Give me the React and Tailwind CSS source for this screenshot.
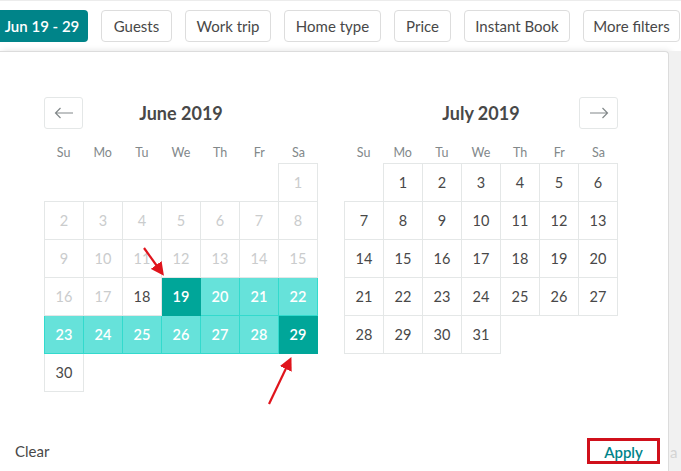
import React from 'react';

const filters = [
    { label: 'Guests', w: 'w-[71px]' },
    { label: 'Work trip', w: 'w-[86px]' },
    { label: 'Home type', w: 'w-[97px]' },
    { label: 'Price', w: 'w-[57px]' },
    { label: 'Instant Book', w: 'w-[106px]' },
    { label: 'More filters', w: 'w-[97px]' }
];
const weekdays = ['Su', 'Mo', 'Tu', 'We', 'Th', 'Fr', 'Sa'];

// June 2019 starts on Saturday, July 2019 on Monday
const buildWeeks = (offset, days) => {
    const cells = [...Array(offset).fill(null), ...Array.from({ length: days }, (_, i) => i + 1)];
    while (cells.length % 7) cells.push(null);
    const weeks = [];
    for (let i = 0; i < cells.length; i += 7) weeks.push(cells.slice(i, i + 7));
    return weeks;
};

function dayClass(month, day) {
    if (month === 'june') {
        if (day === 19 || day === 29) return 'bg-[#00a699] border-[#00a699] text-white font-semibold';
        if (day > 19 && day < 29) return 'bg-[#66e2da] border-[#33dacd] text-white font-semibold';
        if (day < 18) return 'bg-white border-[#e4e7e7] text-[#cacccd]';
    }
    return 'bg-white border-[#e4e7e7] text-[#484848]';
}

function NavButton({ dir }) {
    return (
        <button className="w-[39px] h-[32px] border border-[#e4e7e7] rounded-[3px] bg-white flex items-center justify-center">
            <svg width="20" height="12" viewBox="0 0 20 12" fill="none" stroke="#82888a" strokeWidth="1.2">
                {dir === 'left' ? (
                    <path d="M19 6H1.5M6.5 1L1.5 6l5 5" />
                ) : (
                    <path d="M1 6h17.5M13.5 1l5 5-5 5" />
                )}
            </svg>
        </button>
    );
}

function Month({ title, name, offset, days, nav }) {
    const weeks = buildWeeks(offset, days);
    return (
        <div className="w-[274px]">
            <div className="relative h-[32px] flex items-center justify-center">
                {nav === 'left' && <div className="absolute left-0 top-0"><NavButton dir="left" /></div>}
                {nav === 'right' && <div className="absolute right-0 top-0"><NavButton dir="right" /></div>}
                <div className="text-[18px] font-bold text-[#484848]">{title}</div>
            </div>
            <div className="mt-[15px] h-[19px] grid grid-cols-7 text-[12.5px] text-[#82888a]">
                {weekdays.map((d) => (
                    <div key={d} className="text-center">{d}</div>
                ))}
            </div>
            <table className="border-collapse">
                <tbody>
                    {weeks.map((week, wi) => (
                        <tr key={wi}>
                            {week.map((day, di) =>
                                day ? (
                                    <td
                                        key={di}
                                        className={`w-[39px] h-[38px] p-0 border text-center text-[14.5px] ${dayClass(name, day)}`}
                                    >
                                        {day}
                                    </td>
                                ) : (
                                    <td key={di} className="w-[39px] h-[38px] p-0" />
                                )
                            )}
                        </tr>
                    ))}
                </tbody>
            </table>
        </div>
    );
}

export default function App() {
    return (
        <div className="relative w-[681px] h-[471px] overflow-hidden bg-white flex flex-col font-['Lato','Liberation_Sans',sans-serif]">
            {/* Filter bar */}
            <div className="h-[51px] shrink-0 border-t border-[#ececec] flex items-start gap-[13px] pt-[9px]">
                <button className="-ml-[4px] w-[92px] shrink-0 h-[32px] rounded-[4px] bg-[#008489] text-white text-[15px] font-semibold whitespace-nowrap">
                    Jun 19 - 29
                </button>
                {filters.map((f) => (
                    <button
                        key={f.label}
                        className={`${f.w} h-[32px] shrink-0 rounded-[4px] border border-[#dddddd] bg-white text-[#484848] text-[15px] whitespace-nowrap`}
                    >
                        {f.label}
                    </button>
                ))}
            </div>

            {/* Date picker panel */}
            <div className="flex flex-1 min-h-0">
                <div className="w-[669px] shrink-0 flex flex-col bg-white border-t border-r border-[#dcdcdc] rounded-tr-[4px] shadow-[2px_0_6px_rgba(0,0,0,0.12)]">
                    <div className="flex gap-[26px] pl-[44px] pt-[45px]">
                        <Month title="June 2019" name="june" offset={6} days={30} nav="left" />
                        <Month title="July 2019" name="july" offset={1} days={31} nav="right" />
                    </div>
                    <div className="mt-auto flex items-center justify-between pl-[15px] pr-[8px] pb-[7px]">
                        <button className="text-[15px] text-[#484848]">Clear</button>
                        <button className="h-[26px] w-[73px] border-[3px] border-[#d0101b] text-[15px] font-semibold text-[#008489]">
                            Apply
                        </button>
                    </div>
                </div>
                <div className="flex-1 bg-[#f1f1f1] flex items-end pb-[10px] overflow-hidden">
                    <span className="text-[15px] leading-[18px] text-[#d4d4d4] whitespace-nowrap pl-[1px]">a</span>
                </div>
            </div>

            {/* Red annotation arrows */}
            <svg className="absolute inset-0 pointer-events-none" width="681" height="471" viewBox="0 0 681 471">
                <defs>
                    <marker id="head" markerWidth="6" markerHeight="6" refX="4.5" refY="3" orient="auto" markerUnits="strokeWidth">
                        <path d="M0 0L6 3L0 6z" fill="#e0141c" />
                    </marker>
                </defs>
                <line x1="144" y1="248" x2="162" y2="273" stroke="#e0141c" strokeWidth="2.2" markerEnd="url(#head)" />
                <line x1="269" y1="404" x2="290" y2="360" stroke="#e0141c" strokeWidth="2.2" markerEnd="url(#head)" />
            </svg>
        </div>
    );
}
